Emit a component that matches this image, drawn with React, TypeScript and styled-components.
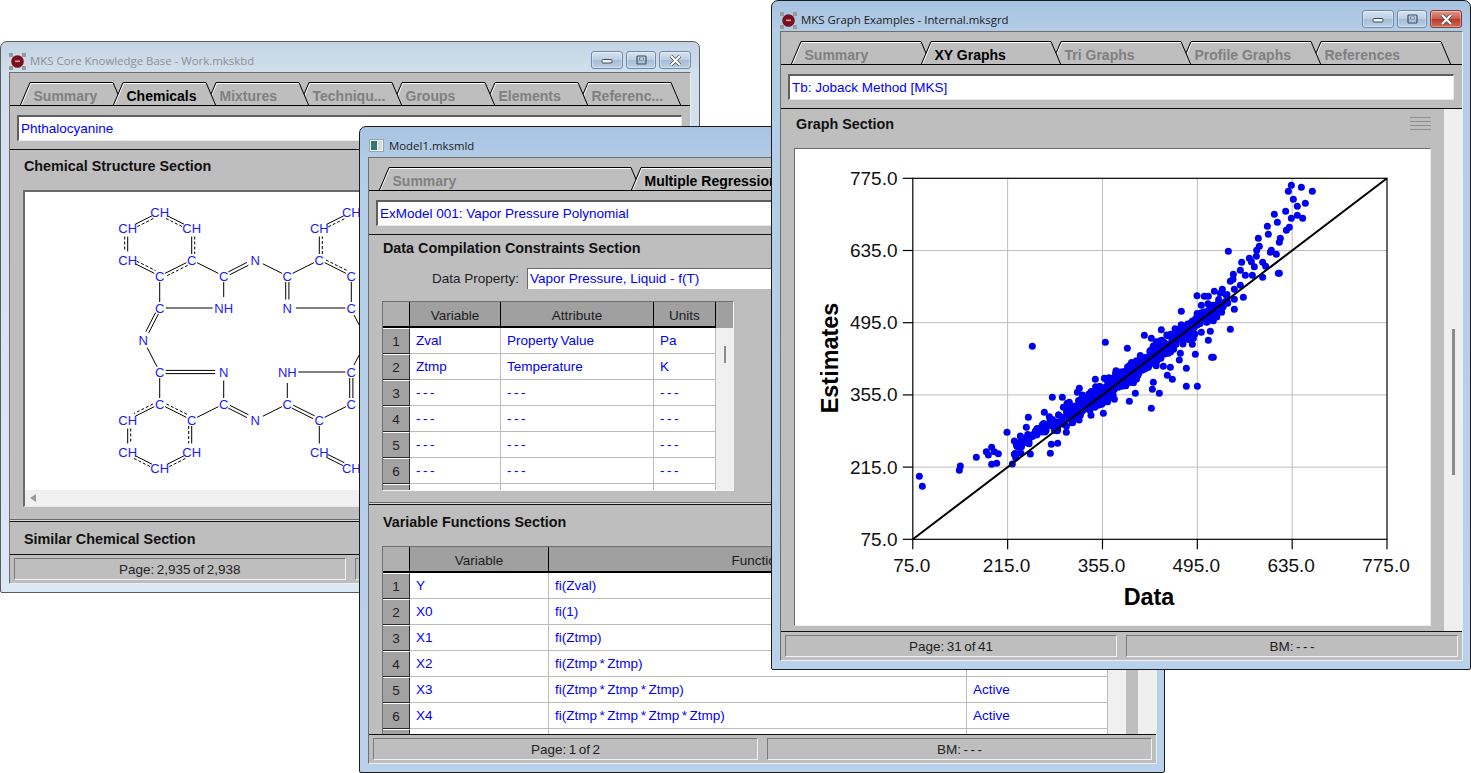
import React from 'react';
import styled, { createGlobalStyle } from 'styled-components';

const GlobalStyle = createGlobalStyle`
  html, body { margin: 0; padding: 0; background: #fff; overflow: hidden; }
  * { box-sizing: border-box; }
`;

const BLUE = '#0000ff';
const PANEL = '#bebebe';

const Desktop = styled.div`
  position: relative;
  width: 1471px;
  height: 773px;
  overflow: hidden;
  background: #fff;
  font-family: "Liberation Sans", Arial, sans-serif;
  font-size: 13.5px;
`;

const Win = styled.section<{ $x: number; $y: number; $w: number; $h: number; $active?: boolean }>`
  position: absolute;
  isolation: isolate;
  left: ${(p) => p.$x}px;
  top: ${(p) => p.$y}px;
  width: ${(p) => p.$w}px;
  height: ${(p) => p.$h}px;
  display: flex;
  flex-direction: column;
  padding: 0 ${(p) => (p.$active ? 7 : 8)}px 8px 8px;
  border: 1px solid ${(p) => (p.$active ? '#1c1c1c' : '#5c5c5c')};
  border-radius: 7px 7px 2px 2px;
  background: ${(p) =>
    p.$active
      ? 'linear-gradient(#a6c3e1 0, #b4cde7 32px, #b9d1ea 100%)'
      : 'linear-gradient(#c4d4e4 0, #d2dfec 31px, #dce8f4 100%)'};
`;

const TitleBar = styled.header`
  height: 30px;
  flex: none;
  display: flex;
  align-items: flex-start;
  padding-top: 7px;
  gap: 4px;
`;

const TitleText = styled.span<{ $active?: boolean }>`
  font-family: "Open Sans", "Noto Sans", sans-serif;
  font-size: 11.42px;
  line-height: 24px;
  white-space: nowrap;
  color: ${(p) => (p.$active ? '#1c1c1c' : '#8b9096')};
`;

const Controls = styled.div<{ $inset: number }>`
  margin-left: auto;
  margin-right: ${(p) => p.$inset}px;
  margin-top: 2px;
  display: flex;
  gap: 3px;
`;

const CtlButton = styled.button<{ $w: number; $close?: boolean }>`
  width: ${(p) => p.$w}px;
  height: 18px;
  padding: 0;
  display: flex;
  align-items: center;
  justify-content: center;
  border-radius: 3px;
  border: 1px solid ${(p) => (p.$close ? '#8a3a30' : '#6f8aac')};
  background: ${(p) =>
    p.$close
      ? 'linear-gradient(#dc9a8e 0, #c9594a 50%, #b73a2b 52%, #cf6a55 100%)'
      : 'linear-gradient(#d8e4f1 0, #b9cde3 50%, #a5bdd8 52%, #bdd0e5 100%)'};
  box-shadow: inset 0 0 0 1px rgba(255, 255, 255, 0.35);
`;

const Panel = styled.div`
  flex: 1;
  min-height: 0;
  display: flex;
  flex-direction: column;
  background: ${PANEL};
  border-top: 1px solid #6e6e6e;
  border-left: 1px solid #6e6e6e;
  border-right: 1px solid #eeeeee;
  border-bottom: 1px solid #eeeeee;
`;

const TabStrip = styled.div`
  flex: none;
  height: 33px;
  padding: 9px 0 0 10px;
  display: flex;
  align-items: flex-start;
  border-bottom: 1px solid #000;
  overflow: hidden;
`;

const TabBox = styled.div<{ $w: number; $z: number; $active?: boolean }>`
  position: relative;
  flex: none;
  width: ${(p) => p.$w}px;
  height: 24px;
  margin-right: -10px;
  padding-left: 13.5px;
  z-index: ${(p) => p.$z};
  font-size: 14px;
  font-weight: bold;
  line-height: 29px;
  white-space: nowrap;
  color: ${(p) => (p.$active ? '#000' : '#808080')};
`;

const TabLabel = styled.span`
  position: relative;
`;

const TabShape = styled.svg`
  position: absolute;
  left: 0;
  top: 0;
`;

const Field = styled.div<{ $right?: number }>`
  flex: none;
  height: 26px;
  margin: 9px ${(p) => p.$right ?? 8}px 8px 7px;
  padding-left: 2px;
  line-height: 23px;
  color: ${BLUE};
  white-space: nowrap;
  overflow: hidden;
  background: #fff;
  border-top: 2px solid #5f5f5f;
  border-left: 2px solid #5f5f5f;
  border-right: 1px solid #e8e8e8;
  border-bottom: 1px solid #e8e8e8;
`;

const Rule = styled.div<{ $double?: boolean }>`
  flex: none;
  height: ${(p) => (p.$double ? 3 : 1)}px;
  background: ${(p) => (p.$double ? 'linear-gradient(#6a6a6a 0 1px, #d8d8d8 1px 2px, #111 2px)' : '#111')};
`;

const Row = styled.div`
  flex: 1;
  min-height: 0;
  display: flex;
`;

const Column = styled.div`
  flex: 1;
  min-width: 0;
  display: flex;
  flex-direction: column;
  overflow: hidden;
`;

const Section = styled.div<{ $h?: number }>`
  flex: ${(p) => (p.$h ? 'none' : '1')};
  height: ${(p) => (p.$h ? `${p.$h}px` : 'auto')};
  min-height: 0;
  overflow: hidden;
  padding-left: 13px;
`;

const SectionTitle = styled.h3<{ $h: number; $lh?: number }>`
  margin: 0;
  display: flex;
  align-items: flex-start;
  justify-content: space-between;
  height: ${(p) => p.$h}px;
  font-size: 14.35px;
  font-weight: bold;
  line-height: ${(p) => p.$lh ?? p.$h}px;
  color: #111;
  padding-left: 1px;
`;

const ChemBox = styled.div`
  width: 662px;
  height: 317px;
  display: flex;
  flex-direction: column;
  background: #fff;
  border-top: 2px solid #6a6a6a;
  border-left: 2px solid #6a6a6a;
  border-right: 1px solid #e8e8e8;
  border-bottom: 1px solid #e8e8e8;
`;

const ChemCanvas = styled.svg`
  display: block;
  flex: 1;
  min-height: 0;
`;

const HScroll = styled.div`
  flex: none;
  height: 16px;
  background: #f0f0f0;
  padding: 4px 0 0 5px;
  display: flex;
`;

const ArrowLeft = styled.span`
  width: 0;
  height: 0;
  border-top: 4px solid transparent;
  border-bottom: 4px solid transparent;
  border-right: 6px solid #9a9a9a;
`;

const ChemAtom = styled.text`
  font-family: "Liberation Sans", Arial, sans-serif;
  font-size: 13px;
  fill: #1a1aff;
  text-anchor: middle;
  dominant-baseline: central;
`;

const PropertyRow = styled.div`
  display: flex;
  align-items: center;
  height: 21px;
  margin-top: 6px;
  margin-bottom: 12px;
`;

const PropertyLabel = styled.span`
  width: 137px;
  text-align: right;
  color: #222;
`;

const PropertyValue = styled.div`
  flex: 1;
  height: 21px;
  margin: 0 30px 0 8px;
  padding-left: 2px;
  line-height: 20px;
  color: ${BLUE};
  background: #fff;
  border-top: 1px solid #6a6a6a;
  border-left: 1px solid #6a6a6a;
`;

const Table = styled.div<{ $h: number }>`
  display: flex;
  width: fit-content;
  height: ${(p) => p.$h}px;
  overflow: hidden;
  background: #fff;
  border-top: 1px solid #707070;
  border-left: 1px solid #707070;
  border-right: 1px solid #f4f4f4;
  border-bottom: 1px solid #f4f4f4;
`;

const TableBody = styled.div`
  display: flex;
  flex-direction: column;
`;

const TableRow = styled.div<{ $cols: string }>`
  flex: none;
  display: grid;
  grid-template-columns: ${(p) => p.$cols};
  height: 26px;
`;

const HeadCell = styled.div<{ $corner?: boolean }>`
  height: 26px;
  line-height: 28px;
  text-align: center;
  color: #1c1c1c;
  background: ${(p) => (p.$corner ? '#b0b0b0' : '#a0a0a0')};
  border-right: 1px solid #000;
  border-bottom: 2px solid #000;
  box-shadow: 1px 0 0 #fff;
`;

const NumCell = styled.div`
  height: 26px;
  line-height: 25px;
  text-align: center;
  color: #222;
  background: #a2a2a2;
  border-top: 1px solid #fff;
  border-bottom: 1px solid #2a2a2a;
  border-right: 1px solid #2a2a2a;
`;

const DataCell = styled.div`
  height: 26px;
  padding-left: 6px;
  line-height: 25px;
  word-spacing: -1.2px;
  color: ${BLUE};
  white-space: nowrap;
  border-right: 1px solid #bcbcbc;
  border-bottom: 1px solid #bcbcbc;
`;

const TableScroll = styled.div`
  flex: none;
  width: 17px;
  display: flex;
  flex-direction: column;
  background: #f0f0f0;
`;

const TableScrollHead = styled.div`
  flex: none;
  height: 26px;
  background: #a0a0a0;
`;

const TableThumb = styled.div`
  width: 2px;
  height: 17px;
  margin: 18px 0 0 8px;
  background: #8a8a8a;
`;

const VScroll = styled.div`
  flex: none;
  width: 18px;
  background: #efefef;
`;

const VThumb = styled.div<{ $top: number; $h: number }>`
  width: 3px;
  height: ${(p) => p.$h}px;
  margin: ${(p) => p.$top}px 0 0 8px;
  background: #8c8c8c;
`;

const GraphPane = styled.div`
  flex: 1;
  min-width: 0;
  padding: 0 13px 5px 13px;
  display: flex;
  flex-direction: column;
`;

const GraphHead = styled.h3`
  margin: 0;
  flex: none;
  height: 39px;
  display: flex;
  justify-content: space-between;
  padding: 7px 0 0 2px;
  font-size: 14.35px;
  font-weight: bold;
  line-height: 16px;
  color: #111;
`;

const GripIcon = styled.svg`
  display: block;
  margin-top: 1px;
`;

const GraphBox = styled.div`
  flex: 1;
  min-height: 0;
  background: #fff;
  border-top: 1px solid #6a6a6a;
  border-left: 1px solid #6a6a6a;
  border-right: 1px solid #eee;
  border-bottom: 1px solid #eee;
`;

const ChartSvg = styled.svg`
  display: block;
`;

const TickText = styled.text`
  font-family: "Liberation Sans", Arial, sans-serif;
  font-size: 19px;
  fill: #111;
  dominant-baseline: central;
`;

const AxisTitle = styled.text`
  font-family: "Liberation Sans", Arial, sans-serif;
  font-size: 23.4px;
  font-weight: bold;
  fill: #000;
  text-anchor: middle;
  dominant-baseline: central;
`;

const StatusBar = styled.footer`
  flex: none;
  display: flex;
  gap: 9px;
  padding: 3px 4px;
  border-top: 1px solid #111;
`;

const StatusCell = styled.div`
  flex: 1;
  height: 22px;
  line-height: 21px;
  text-align: center;
  word-spacing: -1.3px;
  color: #222;
  overflow: hidden;
  white-space: nowrap;
  border-top: 1px solid #7a7a7a;
  border-left: 1px solid #7a7a7a;
  border-right: 1px solid #f2f2f2;
  border-bottom: 1px solid #f2f2f2;
`;

/* ---------- small drawings ---------- */

const MksIcon = () => (
  <svg width="17" height="17" viewBox="0 0 17 17" style={{ flex: 'none', marginTop: 4 }}>
    <g stroke="#777" strokeWidth="1" strokeDasharray="1 1">
      <line x1="1" y1="1" x2="16" y2="16" />
      <line x1="16" y1="1" x2="1" y2="16" />
    </g>
    <rect x="0" y="0" width="4" height="4" fill="#999" />
    <rect x="13" y="0" width="4" height="4" fill="#999" />
    <rect x="0" y="13" width="4" height="4" fill="#999" />
    <rect x="13" y="13" width="4" height="4" fill="#999" />
    <circle cx="8.5" cy="8.5" r="6.3" fill="#7c0f1f" />
    <rect x="6" y="7.5" width="5" height="1.6" fill="#d9a0a8" />
  </svg>
);

const ModelIcon = () => (
  <svg width="17" height="16" viewBox="0 0 17 16" style={{ flex: 'none', marginTop: 4 }}>
    <rect x="1.5" y="1.5" width="14" height="12" fill="#f2f4f6" stroke="#9aa3ab" />
    <rect x="3" y="3" width="6" height="9" fill="#2f7a6a" />
    <rect x="10" y="3" width="4" height="9" fill="#d5dbe0" />
  </svg>
);

const MinGlyph = () => (
  <svg width="12" height="8" viewBox="0 0 12 8">
    <rect x="1" y="3.5" width="10" height="3.5" rx="1" fill="#f4f7fa" stroke="#3f4d5e" />
  </svg>
);
const MaxGlyph = () => (
  <svg width="11" height="10" viewBox="0 0 11 10">
    <rect x="1" y="1" width="9" height="8" rx="1" fill="none" stroke="#3f4d5e" strokeWidth="1.2" />
    <rect x="3.5" y="3" width="4" height="2" fill="#f4f7fa" stroke="#3f4d5e" strokeWidth="0.6" />
  </svg>
);
const CloseGlyph = () => (
  <svg width="13" height="11" viewBox="0 0 13 11">
    <path d="M2 1 L11 10 M11 1 L2 10" stroke="#4a4a4a" strokeWidth="3.6" />
    <path d="M2 1 L11 10 M11 1 L2 10" stroke="#fff" strokeWidth="2.2" />
  </svg>
);

const WinControls = ({ redClose, inset }: { redClose?: boolean; inset: number }) => (
  <Controls $inset={inset}>
    <CtlButton $w={32}><MinGlyph /></CtlButton>
    <CtlButton $w={30}><MaxGlyph /></CtlButton>
    <CtlButton $w={32} $close={redClose}><CloseGlyph /></CtlButton>
  </Controls>
);

const Tab = ({ label, w, z, active }: { label: string; w: number; z: number; active?: boolean }) => {
  const top = `M0 24 L10 0.5 L${w - 10} 0.5 L${w} 24`;
  const inner = `M1.5 23 L10.8 1.5 L${w - 10.5} 1.5`;
  return (
    <TabBox $w={w} $z={active ? 50 : z} $active={active}>
      <TabShape width={w} height={24} viewBox={`0 0 ${w} 24`}>
        <path d={`${top} Z`} fill={PANEL} stroke="none" />
        <path d={inner} fill="none" stroke="#fff" strokeWidth="1" />
        <path d={top} fill="none" stroke="#000" strokeWidth="1" />
        {!active && <line x1="0" y1="23.5" x2={w} y2="23.5" stroke="#000" />}
      </TabShape>
      <TabLabel>{label}</TabLabel>
    </TabBox>
  );
};

const Tabs = ({ items, w, active }: { items: string[]; w: number; active: number }) => (
  <TabStrip>
    {items.map((t, i) => (
      <Tab key={t} label={t} w={w} z={items.length - i} active={i === active} />
    ))}
  </TabStrip>
);

/* ---------- molecule ---------- */

type Atom = [string, number, number];
const atoms: Record<string, Atom> = {
  a: ['CH', 159.7, 212], b: ['CH', 127.7, 228], c: ['CH', 191.7, 228], d: ['CH', 127.7, 260],
  e: ['C', 191.7, 260], f: ['C', 159.7, 276], g: ['C', 223.7, 276], h: ['N', 255.3, 260],
  i: ['C', 287.3, 276], j: ['C', 319.3, 260], k: ['CH', 319.3, 228], l: ['CH', 351.3, 212],
  m: ['C', 351.3, 276], n: ['N', 287.3, 308], o: ['C', 351.3, 308], p: ['C', 159.7, 308],
  q: ['NH', 223.7, 308], r: ['N', 143.3, 340], s: ['C', 159.7, 372], t: ['N', 223.7, 372],
  u: ['NH', 287.3, 372], v: ['C', 351.3, 372], w: ['C', 159.7, 404], x: ['C', 223.7, 404],
  y: ['C', 287.3, 404], z: ['C', 351.3, 404], A: ['CH', 127.7, 420], B: ['C', 191.7, 420],
  D: ['N', 255.3, 420], E: ['C', 319.3, 420], F: ['CH', 127.7, 452], G: ['CH', 191.7, 452],
  H: ['CH', 159.7, 468], I: ['CH', 319.3, 452], J: ['CH', 351.3, 468],
};

type Bond = [string, string, 's' | 'd' | 'a', number?];
const bonds: Bond[] = [
  ['a', 'b', 'a', -1], ['a', 'c', 'a', 1], ['b', 'd', 'a', 1], ['c', 'e', 'a', -1], ['d', 'f', 'a', -1], ['e', 'f', 'a', -1],
  ['e', 'g', 's'], ['g', 'h', 'd'], ['h', 'i', 's'], ['i', 'j', 's'], ['i', 'n', 'd'], ['j', 'k', 'a', 1],
  ['k', 'l', 'a', 1], ['j', 'm', 'a', -1], ['m', 'o', 's'], ['n', 'o', 's'], ['f', 'p', 's'], ['p', 'q', 's'],
  ['g', 'q', 's'], ['p', 'r', 'd'], ['r', 's', 's'], ['s', 't', 'd'], ['s', 'w', 's'], ['t', 'x', 's'],
  ['w', 'B', 'a', -1], ['w', 'A', 'a', 1], ['A', 'F', 'a', -1], ['B', 'G', 'a', 1], ['F', 'H', 'a', 1], ['G', 'H', 'a', -1],
  ['B', 'x', 's'], ['x', 'D', 'd'], ['D', 'y', 's'], ['y', 'E', 'd'], ['y', 'u', 's'], ['u', 'v', 's'],
  ['v', 'z', 'd'], ['z', 'E', 's'], ['E', 'I', 's'], ['I', 'J', 'd'],
];

const bondLines = (bond: Bond) => {
  const [p, q, kind, side] = bond;
  const A = atoms[p];
  const B = atoms[q];
  const dx = B[1] - A[1];
  const dy = B[2] - A[2];
  const len = Math.hypot(dx, dy);
  const ux = dx / len;
  const uy = dy / len;
  const gap = (a: Atom) => (a[0].length > 1 || a[0] === 'N' ? (a[0] === 'NH' ? 11 : 8.5) : 6);
  const x1 = A[1] + ux * gap(A);
  const y1 = A[2] + uy * gap(A);
  const x2 = B[1] - ux * gap(B);
  const y2 = B[2] - uy * gap(B);
  const nx = -uy;
  const ny = ux;
  if (kind === 's') return [{ x1, y1, x2, y2, dash: '' }];
  if (kind === 'd') {
    return [
      { x1: x1 + nx * 1.6, y1: y1 + ny * 1.6, x2: x2 + nx * 1.6, y2: y2 + ny * 1.6, dash: '' },
      { x1: x1 - nx * 1.6, y1: y1 - ny * 1.6, x2: x2 - nx * 1.6, y2: y2 - ny * 1.6, dash: '' },
    ];
  }
  const o = (side ?? 1) * 3;
  return [
    { x1, y1, x2, y2, dash: '' },
    { x1: x1 + nx * o, y1: y1 + ny * o, x2: x2 + nx * o, y2: y2 + ny * o, dash: '3 2' },
  ];
};

const Molecule = () => (
  <ChemCanvas viewBox="25 192 659 298" preserveAspectRatio="xMinYMin slice">
    {bonds.flatMap((b, i) =>
      bondLines(b).map((l, j) => (
        <line key={`${i}-${j}`} x1={l.x1} y1={l.y1} x2={l.x2} y2={l.y2} stroke="#000" strokeWidth="1" strokeDasharray={l.dash || undefined} />
      )),
    )}
    <line x1="354" y1="315" x2="367" y2="340" stroke="#000" />
    <line x1="354" y1="365" x2="367" y2="340" stroke="#000" />
    {Object.entries(atoms).map(([k, a]) => (
      <ChemAtom key={k} x={a[1]} y={a[2]}>{a[0]}</ChemAtom>
    ))}
  </ChemCanvas>
);

/* ---------- scatter ---------- */

const traced: [number, number][] = [
  [115,919],[124,949],[235,901],[238,888],[286,862],[316,845],[332,832],[322,855],[352,851],[332,883],[347,880],[340,845],
  [378,787],[394,882],[400,853],[400,813],[442,742],[436,772],[454,529],[490,727],[514,682],[544,682],[508,850],[511,823],
  [530,820],[556,787],[547,712],[565,697],[595,655],[589,667],[673,517],[739,535],[790,496],[811,505],[841,479],[901,424],
  [948,377],[1048,478],[1042,244],[934,523],[943,553],[982,511],[988,484],[961,487],[992,562],[997,562],[916,595],[916,649],
  [949,649],[811,715],[835,670],[814,658],[817,637],[859,616],[874,628],[868,592],[847,589],[667,730],[630,736],[745,694],
  [763,670],[895,570],[898,550],[643,628],[670,625],[695,625],[705,602],[448,852],[420,850],[505,740],[533,735],
  [1231,46],[1261,52],[1294,64],[1222,64],[1237,88],[1273,100],[1249,109],[1214,124],[1180,133],[1231,145],[1249,136],[1265,145],
  [1189,157],[1159,169],[1225,172],[1216,181],[1162,193],[1132,205],[1198,205],[1195,217],[1135,229],[1127,241],[1171,241],[1168,247],
  [1186,253],[1126,259],[1105,265],[1082,277],[1111,275],[1120,290],[1145,277],[1154,289],[1078,301],[1057,313],[1093,316],[1114,316],
  [1145,322],[1192,310],[1195,310],[1048,334],[1056,328],[1078,346],[1060,358],[1087,382],[1024,358],[1000,364],[1018,370],[1036,376],[982,379],[970,379],
  [961,406],[988,406],[1060,418],[1060,388],[1040,400],[1015,405],[1000,425],[997,452],[975,440],
];

const mulberry = (seed: number) => () => {
  seed = (seed + 0x6d2b79f5) | 0;
  let t = Math.imul(seed ^ (seed >>> 15), 1 | seed);
  t = (t + Math.imul(t ^ (t >>> 7), 61 | t)) ^ t;
  return ((t ^ (t >>> 14)) >>> 0) / 4294967296;
};

const band: [number, number][] = (() => {
  const r = mulberry(4127);
  const out: [number, number][] = [];
  for (let i = 0; i < 620; i++) {
    const pick = r();
    const u = pick < 0.35 ? r() : 0.15 + ((r() + r()) / 2) * 0.75;
    const x = 400 + u * 640;
    const n = (r() + r() + r() - 1.5) * 30;
    const offset = x < 700 ? (-38 * (700 - x)) / 300 : 0;
    const y = 1108 - 0.761 * (x - 95) + offset + n;
    out.push([x, y]);
  }
  return out;
})();

const toPage = ([x, y]: [number, number]) => [880 + x / 3, 170 + y / 3];
const points = [...traced, ...band].map(toPage);

const PX = 911.8;
const PY = 178.3;
const PW = 474.2;
const PH = 361;
const labels = ['75.0', '215.0', '355.0', '495.0', '635.0', '775.0'];

const Chart = () => (
  <ChartSvg width="636" height="476" viewBox="794 149 636 476">
    {labels.map((_, i) => {
      const x = PX + (PW * i) / 5;
      const y = PY + PH - (PH * i) / 5;
      return (
        <g key={i}>
          {i > 0 && i < 5 && <line x1={x} y1={PY} x2={x} y2={PY + PH} stroke="#bdbdbd" />}
          {i > 0 && i < 5 && <line x1={PX} y1={y} x2={PX + PW} y2={y} stroke="#bdbdbd" />}
        </g>
      );
    })}
    {points.map(([x, y], i) => (
      <circle key={i} cx={x} cy={y} r="3.5" fill="#0000f0" />
    ))}
    <line x1={PX} y1={PY + PH} x2={PX + PW} y2={PY} stroke="#000" strokeWidth="2" />
    <rect x={PX} y={PY} width={PW} height={PH} fill="none" stroke="#000" strokeWidth="1.2" />
    {labels.map((l, i) => {
      const x = PX + (PW * i) / 5;
      const y = PY + PH - (PH * i) / 5;
      return (
        <g key={l}>
          <line x1={PX - 10} y1={y} x2={PX} y2={y} stroke="#000" strokeWidth="1.2" />
          <line x1={x} y1={PY + PH} x2={x} y2={PY + PH + 10} stroke="#000" strokeWidth="1.2" />
          <TickText x={896.5} y={y} textAnchor="end">{l}</TickText>
          <TickText x={x - 1} y={565} textAnchor="middle">{l}</TickText>
        </g>
      );
    })}
    <AxisTitle x={1148} y={597}>Data</AxisTitle>
    <AxisTitle x={829} y={358} transform="rotate(-90 829 358)">Estimates</AxisTitle>
  </ChartSvg>
);

/* ---------- tables ---------- */

const DataTable = ({
  cols,
  height,
  head,
  rows,
  total,
  thumb,
}: {
  cols: string;
  height: number;
  head: string[];
  rows: string[][];
  total: number;
  thumb?: boolean;
}) => (
  <Table $h={height}>
    <TableBody>
      <TableRow $cols={cols}>
        <HeadCell $corner />
        {head.map((h, c) => (
          <HeadCell key={c}>{h}</HeadCell>
        ))}
      </TableRow>
      {Array.from({ length: total }).map((_, i) => (
        <TableRow key={i} $cols={cols}>
          <NumCell>{i < total - 1 ? i + 1 : ''}</NumCell>
          {head.map((_h, c) => (
            <DataCell key={c}>{rows[i]?.[c] ?? ''}</DataCell>
          ))}
        </TableRow>
      ))}
    </TableBody>
    <TableScroll>
      <TableScrollHead />
      {thumb && <TableThumb />}
    </TableScroll>
  </Table>
);

const dash = '- - -';

export default function App() {
  return (
    <Desktop>
      <GlobalStyle />

      <Win $x={0} $y={41} $w={700} $h={552}>
        <TitleBar>
          <MksIcon />
          <TitleText>MKS Core Knowledge Base - Work.mkskbd</TitleText>
          <WinControls inset={0} />
        </TitleBar>
        <Panel>
          <Tabs w={103} active={1} items={['Summary', 'Chemicals', 'Mixtures', 'Techniqu...', 'Groups', 'Elements', 'Referenc...']} />
          <Field>Phthalocyanine</Field>
          <Rule />
          <Section $h={369}>
            <SectionTitle $h={40} $lh={32}>Chemical Structure Section</SectionTitle>
            <ChemBox>
              <Molecule />
              <HScroll><ArrowLeft /></HScroll>
            </ChemBox>
          </Section>
          <Rule $double />
          <Section $h={32}>
            <SectionTitle $h={32} $lh={34}>Similar Chemical Section</SectionTitle>
          </Section>
          <StatusBar>
            <StatusCell>Page: 2,935 of 2,938</StatusCell>
            <StatusCell />
          </StatusBar>
        </Panel>
      </Win>

      <Win $x={359} $y={126} $w={806} $h={647} $active>
        <TitleBar>
          <ModelIcon />
          <TitleText $active>Model1.mksmld</TitleText>
        </TitleBar>
        <Panel>
          <Tabs w={262} active={1} items={['Summary', 'Multiple Regression']} />
          <Field>ExModel 001: Vapor Pressure Polynomial</Field>
          <Rule />
          <Row>
            <Column>
              <Section $h={267}>
                <SectionTitle $h={27}>Data Compilation Constraints Section</SectionTitle>
                <PropertyRow>
                  <PropertyLabel>Data Property:</PropertyLabel>
                  <PropertyValue>Vapor Pressure, Liquid - f(T)</PropertyValue>
                </PropertyRow>
                <DataTable
                  cols="27px 91px 153px 62px"
                  height={190}
                  head={['Variable', 'Attribute', 'Units']}
                  total={7}
                  thumb
                  rows={[
                    ['Zval', 'Property Value', 'Pa'],
                    ['Ztmp', 'Temperature', 'K'],
                    [dash, dash, dash],
                    [dash, dash, dash],
                    [dash, dash, dash],
                    [dash, dash, dash],
                  ]}
                />
              </Section>
              <Rule $double />
              <Section>
                <SectionTitle $h={41} $lh={34}>Variable Functions Section</SectionTitle>
                <DataTable
                  cols="27px 139px 418px 141px"
                  height={200}
                  head={['Variable', 'Function', '']}
                  total={7}
                  rows={[
                    ['Y', 'fi(Zval)', ''],
                    ['X0', 'fi(1)', ''],
                    ['X1', 'fi(Ztmp)', ''],
                    ['X2', 'fi(Ztmp * Ztmp)', ''],
                    ['X3', 'fi(Ztmp * Ztmp * Ztmp)', 'Active'],
                    ['X4', 'fi(Ztmp * Ztmp * Ztmp * Ztmp)', 'Active'],
                  ]}
                />
              </Section>
            </Column>
            <VScroll />
          </Row>
          <StatusBar>
            <StatusCell>Page: 1 of 2</StatusCell>
            <StatusCell>BM: - - -</StatusCell>
          </StatusBar>
        </Panel>
      </Win>

      <Win $x={771} $y={0} $w={700} $h={670} $active>
        <TitleBar>
          <MksIcon />
          <TitleText $active>MKS Graph Examples - Internal.mksgrd</TitleText>
          <WinControls redClose inset={1} />
        </TitleBar>
        <Panel>
          <Tabs w={140} active={1} items={['Summary', 'XY Graphs', 'Tri Graphs', 'Profile Graphs', 'References']} />
          <Field>Tb: Joback Method [MKS]</Field>
          <Rule />
          <Row>
            <GraphPane>
              <GraphHead>
                Graph Section
                <GripIcon width="21" height="15" viewBox="0 0 21 15">
                  <path d="M0 0.5H21M0 4.5H21M0 8.5H21M0 12.5H21" stroke="#8f8f8f" />
                </GripIcon>
              </GraphHead>
              <GraphBox>
                <Chart />
              </GraphBox>
            </GraphPane>
            <VScroll>
              <VThumb $top={220} $h={146} />
            </VScroll>
          </Row>
          <StatusBar>
            <StatusCell>Page: 31 of 41</StatusCell>
            <StatusCell>BM: - - -</StatusCell>
          </StatusBar>
        </Panel>
      </Win>
    </Desktop>
  );
}
